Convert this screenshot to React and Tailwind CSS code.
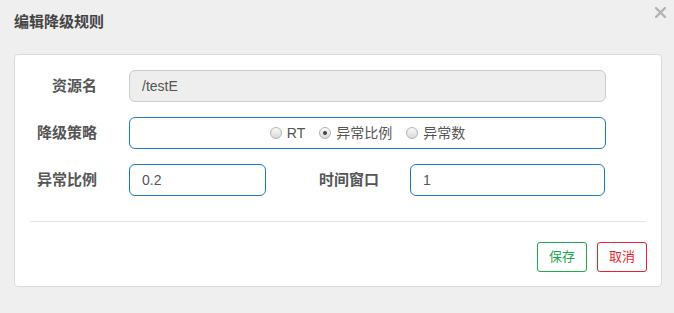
import { useState } from "react";

const font = { fontFamily: '"Liberation Sans", "Noto Sans CJK SC", sans-serif' };

const Radio = ({ checked, label, onClick }) => (
  <label onClick={onClick} className="flex items-center cursor-pointer">
    <span className="relative w-[12px] h-[12px] rounded-full border border-[#b4b4b4] bg-gradient-to-b from-[#fafafa] to-[#d9d9d9] flex items-center justify-center">
      {checked && <span className="w-[4px] h-[4px] rounded-full bg-[#444]" />}
    </span>
    <span className="ml-[5px] text-[14px] text-[#555] leading-none">{label}</span>
  </label>
);

const App = () => {
  const [grade, setGrade] = useState(1);

  return (
    <div style={font} className="relative w-[674px] h-[313px] bg-[#efefef] overflow-hidden">
      <div className="pt-[12px] pl-[14px] text-[15px] leading-[20px] font-bold text-[#444]">
        编辑降级规则
      </div>
      <button className="absolute top-[7px] right-[8px] w-[11px] h-[11px]">
        <svg viewBox="0 0 11 11" className="w-[11px] h-[11px]">
          <path d="M1 1 L10 10 M10 1 L1 10" stroke="#b3b3b3" strokeWidth="2.4" strokeLinecap="round" />
        </svg>
      </button>

      {/* card */}
      <div className="mt-[22px] ml-[14px] w-[648px] bg-white border border-[#dadada] rounded-[4px] pt-[15px] pb-[14px]">
        <div className="flex items-center h-[32px]">
          <div className="w-[82px] text-right text-[15px] font-bold text-[#555]">资源名</div>
          <div className="ml-[32px] w-[477px] h-[32px] rounded-[6px] border border-[#cccccc] bg-[#eeeeee] flex items-center px-[12px] text-[14px] text-[#555]">
            /testE
          </div>
        </div>

        <div className="flex items-center h-[32px] mt-[15px]">
          <div className="w-[82px] text-right text-[15px] font-bold text-[#555]">降级策略</div>
          <div className="ml-[32px] w-[477px] h-[32px] rounded-[6px] border border-[#1d7cbf] flex items-center justify-center gap-[14px]">
            <Radio checked={grade === 0} label="RT" onClick={() => setGrade(0)} />
            <Radio checked={grade === 1} label="异常比例" onClick={() => setGrade(1)} />
            <Radio checked={grade === 2} label="异常数" onClick={() => setGrade(2)} />
          </div>
        </div>

        <div className="flex items-center h-[32px] mt-[15px]">
          <div className="w-[82px] text-right text-[15px] font-bold text-[#555]">异常比例</div>
          <input
            defaultValue="0.2"
            className="ml-[32px] w-[137px] h-[32px] rounded-[6px] border border-[#1d7cbf] px-[12px] text-[14px] text-[#555] outline-none"
          />
          <div className="w-[113px] text-right text-[15px] font-bold text-[#555]">时间窗口</div>
          <input
            defaultValue="1"
            className="ml-[31px] w-[195px] h-[32px] rounded-[6px] border border-[#1d7cbf] px-[12px] text-[14px] text-[#555] outline-none"
          />
        </div>

        <div className="mt-[25px] mx-[15px] h-px bg-[#e5e5e5]" />

        <div className="mt-[20px] pr-[14px] flex justify-end gap-[10px]">
          <button className="w-[50px] h-[30px] rounded-[3px] border border-[#21a74d] text-[13px] text-[#21a74d] bg-white">
            保存
          </button>
          <button className="w-[50px] h-[30px] rounded-[3px] border border-[#ea1f2f] text-[13px] text-[#ea1f2f] bg-white">
            取消
          </button>
        </div>
      </div>
    </div>
  );
};

export default App;
